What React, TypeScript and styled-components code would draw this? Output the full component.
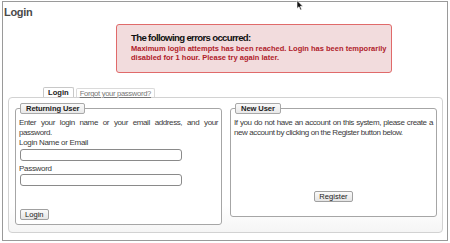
import React from "react";
import styled, { createGlobalStyle } from "styled-components";

const Global = createGlobalStyle`
  html, body { margin: 0; padding: 0; background: #fff; }
  body { font-family: "Liberation Sans", Arial, sans-serif; color: #333; }
  * { box-sizing: border-box; }
`;

const Page = styled.div`
  width: 450px;
  height: 243px;
  padding: 1px 2px 2px 2px;
  position: relative;
  overflow: hidden;
`;

const Frame = styled.div`
  width: 446px;
  height: 240px;
  border: 1px solid #9a9a9a;
  display: flex;
  flex-direction: column;
`;

const Title = styled.h1`
  margin: 3px 0 0 1px;
  font-size: 11px;
  line-height: 15px;
  font-weight: bold;
  color: #4a4a4a;
  letter-spacing: -0.3px;
`;

const ErrorBox = styled.div`
  margin: 4px 0 0 113px;
  width: 276px;
  height: 49px;
  border: 1px solid #e06a6a;
  border-radius: 3px;
  background: #f2dcdd;
  padding: 6px 0 0 14px;
`;

const ErrorTitle = styled.div`
  font-size: 9.6px;
  line-height: 13px;
  font-weight: bold;
  color: #111;
  letter-spacing: -0.65px;
`;

const ErrorText = styled.div`
  margin-top: 1px;
  font-size: 7.5px;
  line-height: 8.5px;
  font-weight: bold;
  color: #b0202a;
`;

const Tabs = styled.div`
  display: flex;
  align-items: flex-end;
  gap: 2px;
  margin: 15px 0 0 40px;
  height: 9px;
`;

const Tab = styled.div<{ $active?: boolean }>`
  height: ${(p) => (p.$active ? "10px" : "9px")};
  padding: 0 ${(p) => (p.$active ? "4px" : "3px")};
  font-size: 7.6px;
  line-height: 9px;
  border: 1px solid ${(p) => (p.$active ? "#c8c8c8" : "#dadada")};
  border-bottom: none;
  border-radius: 2px 2px 0 0;
  background: #fff;
  color: ${(p) => (p.$active ? "#222" : "#777")};
  font-weight: ${(p) => (p.$active ? "bold" : "normal")};
  letter-spacing: ${(p) => (p.$active ? "0" : "-0.3px")};
  text-decoration: ${(p) => (p.$active ? "none" : "underline")};
  position: relative;
  z-index: 1;
`;

const Panel = styled.div`
  margin: 0 0 0 5px;
  width: 435px;
  height: 136px;
  border: 1px solid #d2d2d2;
  border-radius: 4px;
  background: linear-gradient(#fff 80%, #f5f5f5);
  padding: 5px 5px 0 6px;
  display: flex;
  align-items: flex-start;
  gap: 8px;
`;

const Box = styled.fieldset<{ $h: number }>`
  margin: 0;
  width: 207px;
  height: ${(p) => p.$h}px;
  border: 1px solid #a6a6a6;
  border-radius: 3px;
  padding: 0 3px 0 3px;
  display: flex;
  flex-direction: column;
  background: #fff;
`;

const Legend = styled.legend`
  margin-left: 1px;
  padding: 0 5px;
  height: 11px;
  font-size: 7.6px;
  line-height: 9px;
  font-weight: bold;
  letter-spacing: -0.1px;
  color: #222;
  border: 1px solid #a8a8a8;
  border-radius: 2px;
  background: linear-gradient(#fafafa, #e8e8e8);
`;

const Text = styled.p`
  margin: 4px 0 0 0;
  font-size: 8px;
  line-height: 9.5px;
  text-align: justify;
  letter-spacing: -0.4px;
  color: #3a3a3a;
`;

const Label = styled.label<{ $gap?: number }>`
  display: block;
  margin-top: ${(p) => p.$gap ?? 0}px;
  font-size: 8px;
  line-height: 9.5px;
  letter-spacing: -0.3px;
  color: #3a3a3a;
`;

const Input = styled.input`
  display: block;
  width: 162px;
  height: 12px;
  margin: 1px 0 1px 1px;
  border: 1px solid #8a8a8a;
  border-radius: 3px;
  background: #fff;
  padding: 0;
`;

const Button = styled.button<{ $center?: boolean; $bottom: number }>`
  height: 11px;
  padding: 0 4px;
  font-family: "Liberation Sans", Arial, sans-serif;
  font-size: 7.6px;
  line-height: 9px;
  color: #222;
  border: 1px solid #a0a0a0;
  border-radius: 2px;
  background: linear-gradient(#fbfbfb, #e4e4e4);
  align-self: ${(p) => (p.$center ? "center" : "flex-start")};
  margin-top: auto;
  margin-left: ${(p) => (p.$center ? "0" : "1px")};
  margin-bottom: ${(p) => p.$bottom}px;
`;

const Cursor = styled.svg`
  position: absolute;
  left: 296px;
  top: 0px;
`;

export default function App() {
  return (
    <Page>
      <Global />
      <Frame>
        <Title>Login</Title>
        <ErrorBox>
          <ErrorTitle>The following errors occurred:</ErrorTitle>
          <ErrorText>
            Maximum login attempts has been reached. Login has been temporarily
            <br />
            disabled for 1 hour. Please try again later.
          </ErrorText>
        </ErrorBox>
        <Tabs>
          <Tab $active>Login</Tab>
          <Tab>Forgot your password?</Tab>
        </Tabs>
        <Panel>
          <Box $h={122}>
            <Legend>Returning User</Legend>
            <Text>Enter your login name or your email address, and your password.</Text>
            <Label $gap={1}>Login Name or Email</Label>
            <Input type="text" />
            <Label $gap={2}>Password</Label>
            <Input type="password" />
            <Button $bottom={4}>Login</Button>
          </Box>
          <Box $h={114}>
            <Legend>New User</Legend>
            <Text>
              If you do not have an account on this system, please create a new account by clicking on the Register button below.
            </Text>
            <Button $center $bottom={14}>Register</Button>
          </Box>
        </Panel>
      </Frame>
      <Cursor width="8" height="11" viewBox="0 0 8 11">
        <path d="M1 0.5 L1 8.5 L3 6.8 L4.4 10 L5.6 9.4 L4.3 6.3 L6.8 6.3 Z" fill="#111" stroke="#fff" strokeWidth="0.6" />
      </Cursor>
    </Page>
  );
}
